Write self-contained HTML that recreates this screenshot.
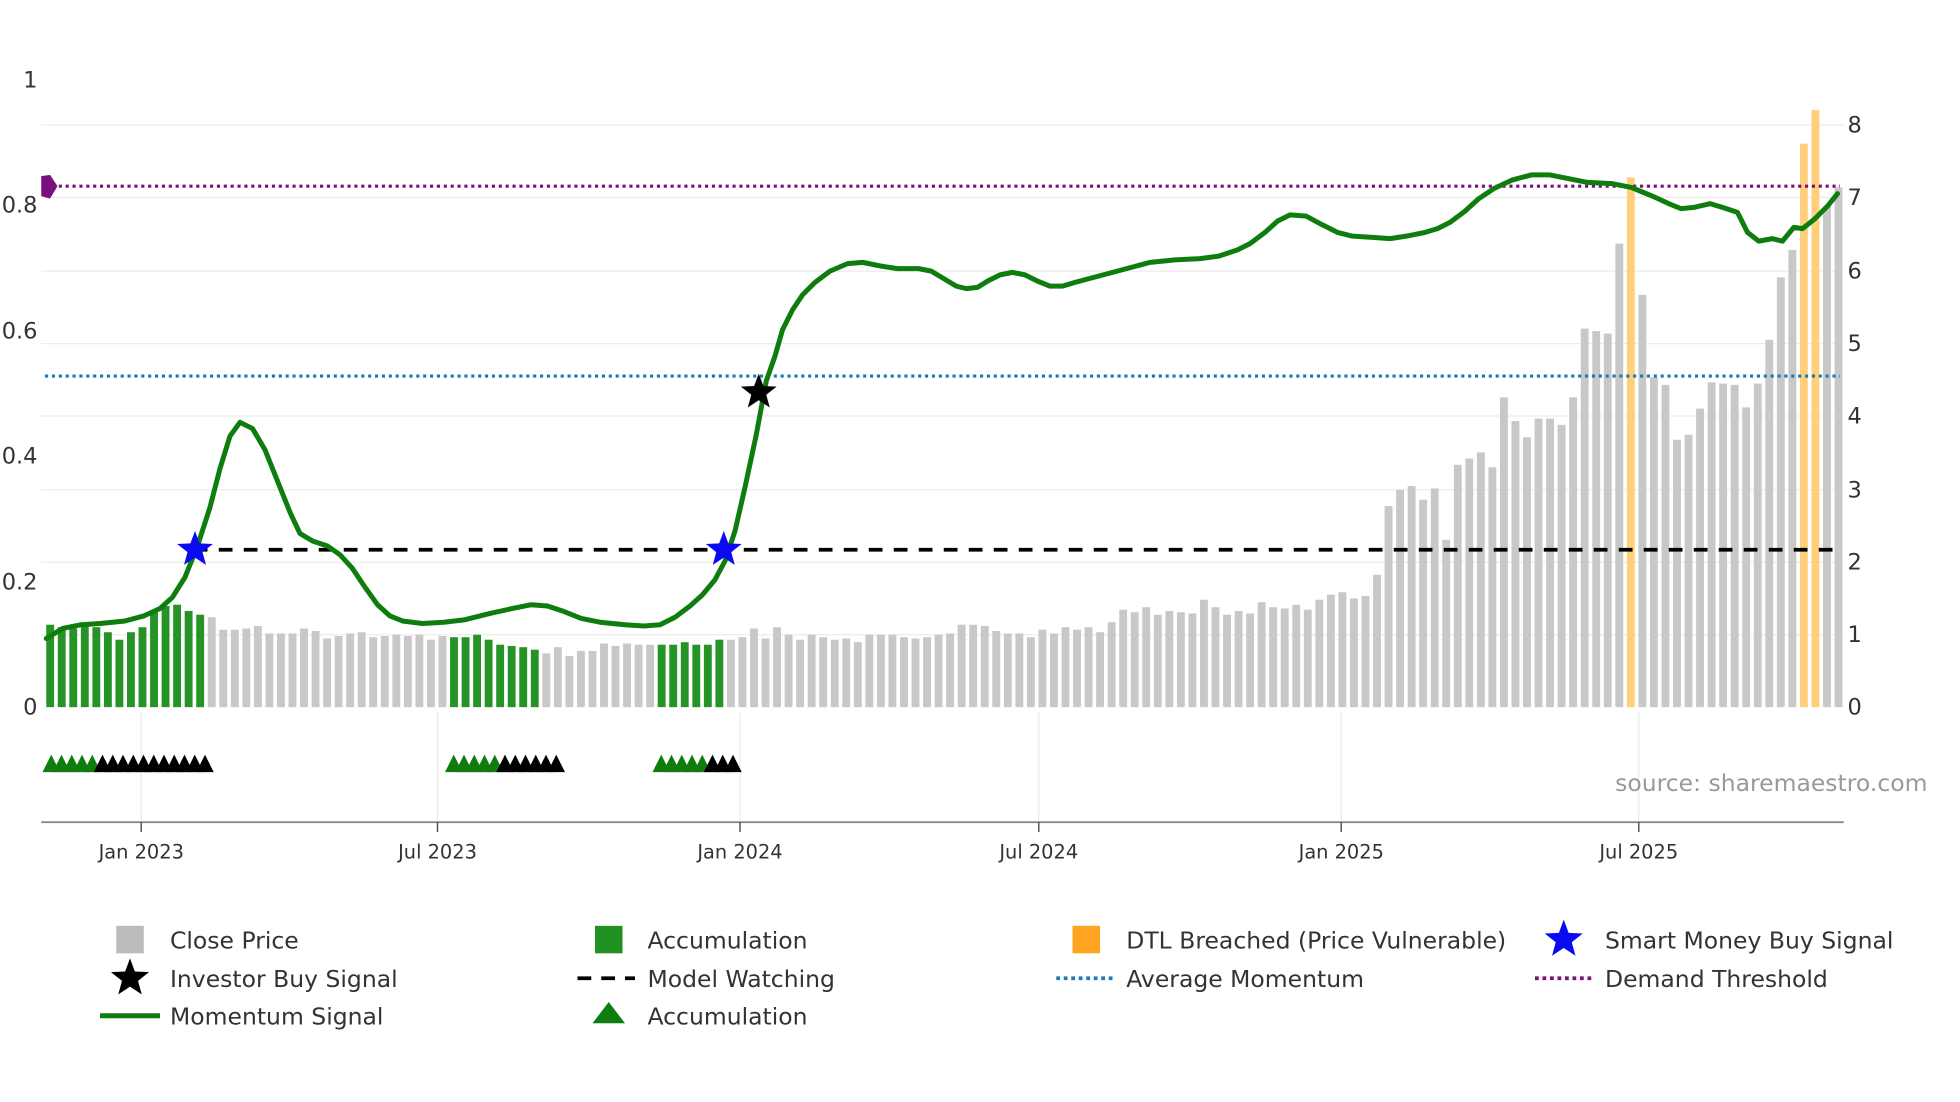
<!DOCTYPE html>
<html><head><meta charset="utf-8"><style>
html,body{margin:0;padding:0;background:#fff;width:1960px;height:1102px;overflow:hidden}
svg{display:block}
text{font-family:"DejaVu Sans","Liberation Sans",sans-serif;fill:#333}
</style></head><body>
<svg id="s" width="1960" height="1102" viewBox="0 0 1568 882" preserveAspectRatio="none">
<g stroke="#ececec" stroke-width="1">
<line x1="33" x2="1475" y1="100" y2="100"/><line x1="33" x2="1475" y1="158" y2="158"/>
<line x1="33" x2="1475" y1="217" y2="217"/><line x1="33" x2="1475" y1="275" y2="275"/>
<line x1="33" x2="1475" y1="333" y2="333"/><line x1="33" x2="1475" y1="392" y2="392"/>
<line x1="33" x2="1475" y1="450" y2="450"/><line x1="33" x2="1475" y1="508" y2="508"/>
<line x1="113" x2="113" y1="570" y2="658"/><line x1="350" x2="350" y1="570" y2="658"/>
<line x1="592" x2="592" y1="570" y2="658"/><line x1="831" x2="831" y1="570" y2="658"/>
<line x1="1073" x2="1073" y1="570" y2="658"/><line x1="1311" x2="1311" y1="570" y2="658"/>
</g>
<g id="bars"></g>
<line x1="36" x2="1472" y1="301" y2="301" stroke="#1f77b4" stroke-width="2.5" stroke-dasharray="2.5,3"/>
<line x1="36" x2="1472" y1="149" y2="149" stroke="#7b0f7b" stroke-width="2.5" stroke-dasharray="2.5,3"/>
<polygon points="33,141 40,140 46,149 40,159 33,157" fill="#7b0f7b"/>
<line x1="155" x2="1470" y1="440" y2="440" stroke="#000" stroke-width="3" stroke-dasharray="11,9"/>
<polyline id="mom" fill="none" stroke="#0e7d0e" stroke-width="4" stroke-linejoin="round" stroke-linecap="round"/>
<g id="tri"></g>
<g id="stars"></g>
<line x1="33" x2="1475" y1="658" y2="658" stroke="#888" stroke-width="1.5"/>
<g stroke="#555" stroke-width="1.2">
<line x1="113" x2="113" y1="658" y2="666"/><line x1="350" x2="350" y1="658" y2="666"/>
<line x1="592" x2="592" y1="658" y2="666"/><line x1="831" x2="831" y1="658" y2="666"/>
<line x1="1073" x2="1073" y1="658" y2="666"/><line x1="1311" x2="1311" y1="658" y2="666"/>
</g>
<g font-size="15.5" text-anchor="middle">
<text x="113" y="687">Jan 2023</text><text x="350" y="687">Jul 2023</text><text x="592" y="687">Jan 2024</text>
<text x="831" y="687">Jul 2024</text><text x="1073" y="687">Jan 2025</text><text x="1311" y="687">Jul 2025</text>
</g>
<g font-size="18" text-anchor="end">
<text x="30" y="70">1</text><text x="30" y="170">0.8</text><text x="30" y="271">0.6</text>
<text x="30" y="371">0.4</text><text x="30" y="472">0.2</text><text x="30" y="572">0</text>
</g>
<g font-size="18">
<text x="1478" y="106">8</text><text x="1478" y="164">7</text><text x="1478" y="223">6</text><text x="1478" y="281">5</text>
<text x="1478" y="339">4</text><text x="1478" y="398">3</text><text x="1478" y="456">2</text><text x="1478" y="514">1</text><text x="1478" y="572">0</text>
</g>
<text x="1542" y="633" font-size="18.8" text-anchor="end" style="fill:#999">source: sharemaestro.com</text>
<g font-size="18.8">
<rect x="93" y="741" width="22" height="22" fill="#bbb"/><text x="136" y="759">Close Price</text>
<rect x="476" y="741" width="22" height="22" fill="#229122"/><text x="518" y="759">Accumulation</text>
<rect x="858" y="741" width="22" height="22" fill="#ffa51f"/><text x="901" y="759">DTL Breached (Price Vulnerable)</text>
<text x="1284" y="759">Smart Money Buy Signal</text>
<text x="136" y="790">Investor Buy Signal</text>
<line x1="462" x2="508" y1="783" y2="783" stroke="#000" stroke-width="3" stroke-dasharray="11,8"/><text x="518" y="790">Model Watching</text>
<line x1="845" x2="890" y1="783" y2="783" stroke="#1f77b4" stroke-width="3" stroke-dasharray="3,3"/><text x="901" y="790">Average Momentum</text>
<line x1="1228" x2="1273" y1="783" y2="783" stroke="#7b0f7b" stroke-width="3" stroke-dasharray="3,3"/><text x="1284" y="790">Demand Threshold</text>
<line x1="80" x2="128" y1="813" y2="813" stroke="#0e7d0e" stroke-width="4"/><text x="136" y="820">Momentum Signal</text>
<polygon points="474,819 487,802 500,819" fill="#0e7d0e"/><text x="518" y="820">Accumulation</text>
</g>
<g id="lstars"></g>
</svg>
<script>
var NS="http://www.w3.org/2000/svg";
function el(t,a,p){var e=document.createElementNS(NS,t);for(var k in a)e.setAttribute(k,a[k]);document.getElementById(p).appendChild(e);}
var segs=[
[500,502,503,499,502,506,512,506,502,490,485,484,489,492],'g',
[494,504,504,503,501,507,507,507,503,505,511,509,507,506,510,509,508,509,508,512,509],'x',
[510,510,508,512,516,517,518,520],'g',
[523,518,525,521,521,515,517,515,516,516],'x',
[516,516,514,516,516,512],'g',
[512,510,503,511,502,508,512,508,510,512,511,514,508,508,508,510,511,510,508,507,500,500,501,505,507,507,510,504,507,502,504,502,506,498,488,490,486,492,489,490,491,480,486,492,489,491,482,486,487,484,488,480,476,474,479,477,460,
405,392,389,400,391,432,372,367,362,374,318,337,350,335,335,340,318,263,265,267,195],'x',
[142],'o',[236,302,308,352,348,327,306,307,308,326,307,272,222,200],'x',[115,88],'o',[165,150],'x'];
var x=37,st=9.23;
for(var i=0;i<segs.length;i+=2){var c=segs[i+1]=='g'?'#259325':segs[i+1]=='o'?'#ffcf7a':'#c8c8c8';
segs[i].forEach(function(t){el('rect',{x:x,y:t,width:6.3,height:566-t,fill:c},'bars');x+=st;});}
var pts="37,511 50,503 65,500 80,499 100,497 115,493 128,487 138,478 148,462 158,437 168,406 176,375 184,349 192,338 202,343 212,360 222,385 232,410 240,427 250,433 262,437 272,444 282,455 292,470 302,484 312,493 322,497 338,499 355,498 372,496 392,491 410,487 425,484 438,485 450,489 465,495 480,498 500,500 515,501 528,500 540,494 552,485 562,476 572,464 580,449 588,425 596,390 605,348 613,305 620,285 626,264 634,248 642,236 652,226 664,217 678,211 690,210 705,213 718,215 735,215 745,217 755,223 765,229 773,231 782,230 790,225 800,220 810,218 820,220 830,225 840,229 850,229 860,226 875,222 890,218 905,214 920,210 940,208 960,207 975,205 990,200 1000,195 1012,186 1022,177 1032,172 1045,173 1058,180 1070,186 1082,189 1098,190 1112,191 1125,189 1140,186 1150,183 1160,178 1172,169 1183,159 1195,151 1210,144 1225,140 1240,140 1255,143 1270,146 1290,147 1305,150 1322,157 1335,163 1345,167 1355,166 1368,163 1378,166 1390,170 1398,186 1407,193 1418,191 1426,193 1435,182 1442,183 1452,175 1462,165 1470,155";
document.getElementById('mom').setAttribute('points',pts);
function tris(x0,ng,nb){for(var i=0;i<ng+nb;i++){var a=x0+i*8.2;el('polygon',{points:a+',618 '+(a+7)+',604 '+(a+14)+',618',fill:i<ng?'#0e7d0e':'#000'},'tri');}}
tris(34,5,11);tris(356,5,6);tris(522,5,3);
function star(cx,cy,r,f,p){var s="";for(var i=0;i<10;i++){var rr=i%2?r*0.42:r,an=Math.PI*i/5-Math.PI/2;s+=(cx+rr*Math.cos(an)).toFixed(1)+","+(cy+rr*Math.sin(an)).toFixed(1)+" ";}el('polygon',{points:s,fill:f},p);}
star(156,440,15,'#0a0af0','stars');star(579,440,15,'#0a0af0','stars');star(607,314,15,'#000','stars');
star(1251,752,16,'#0a0af0','lstars');star(104,783,16,'#000','lstars');
</script>
</body></html>
